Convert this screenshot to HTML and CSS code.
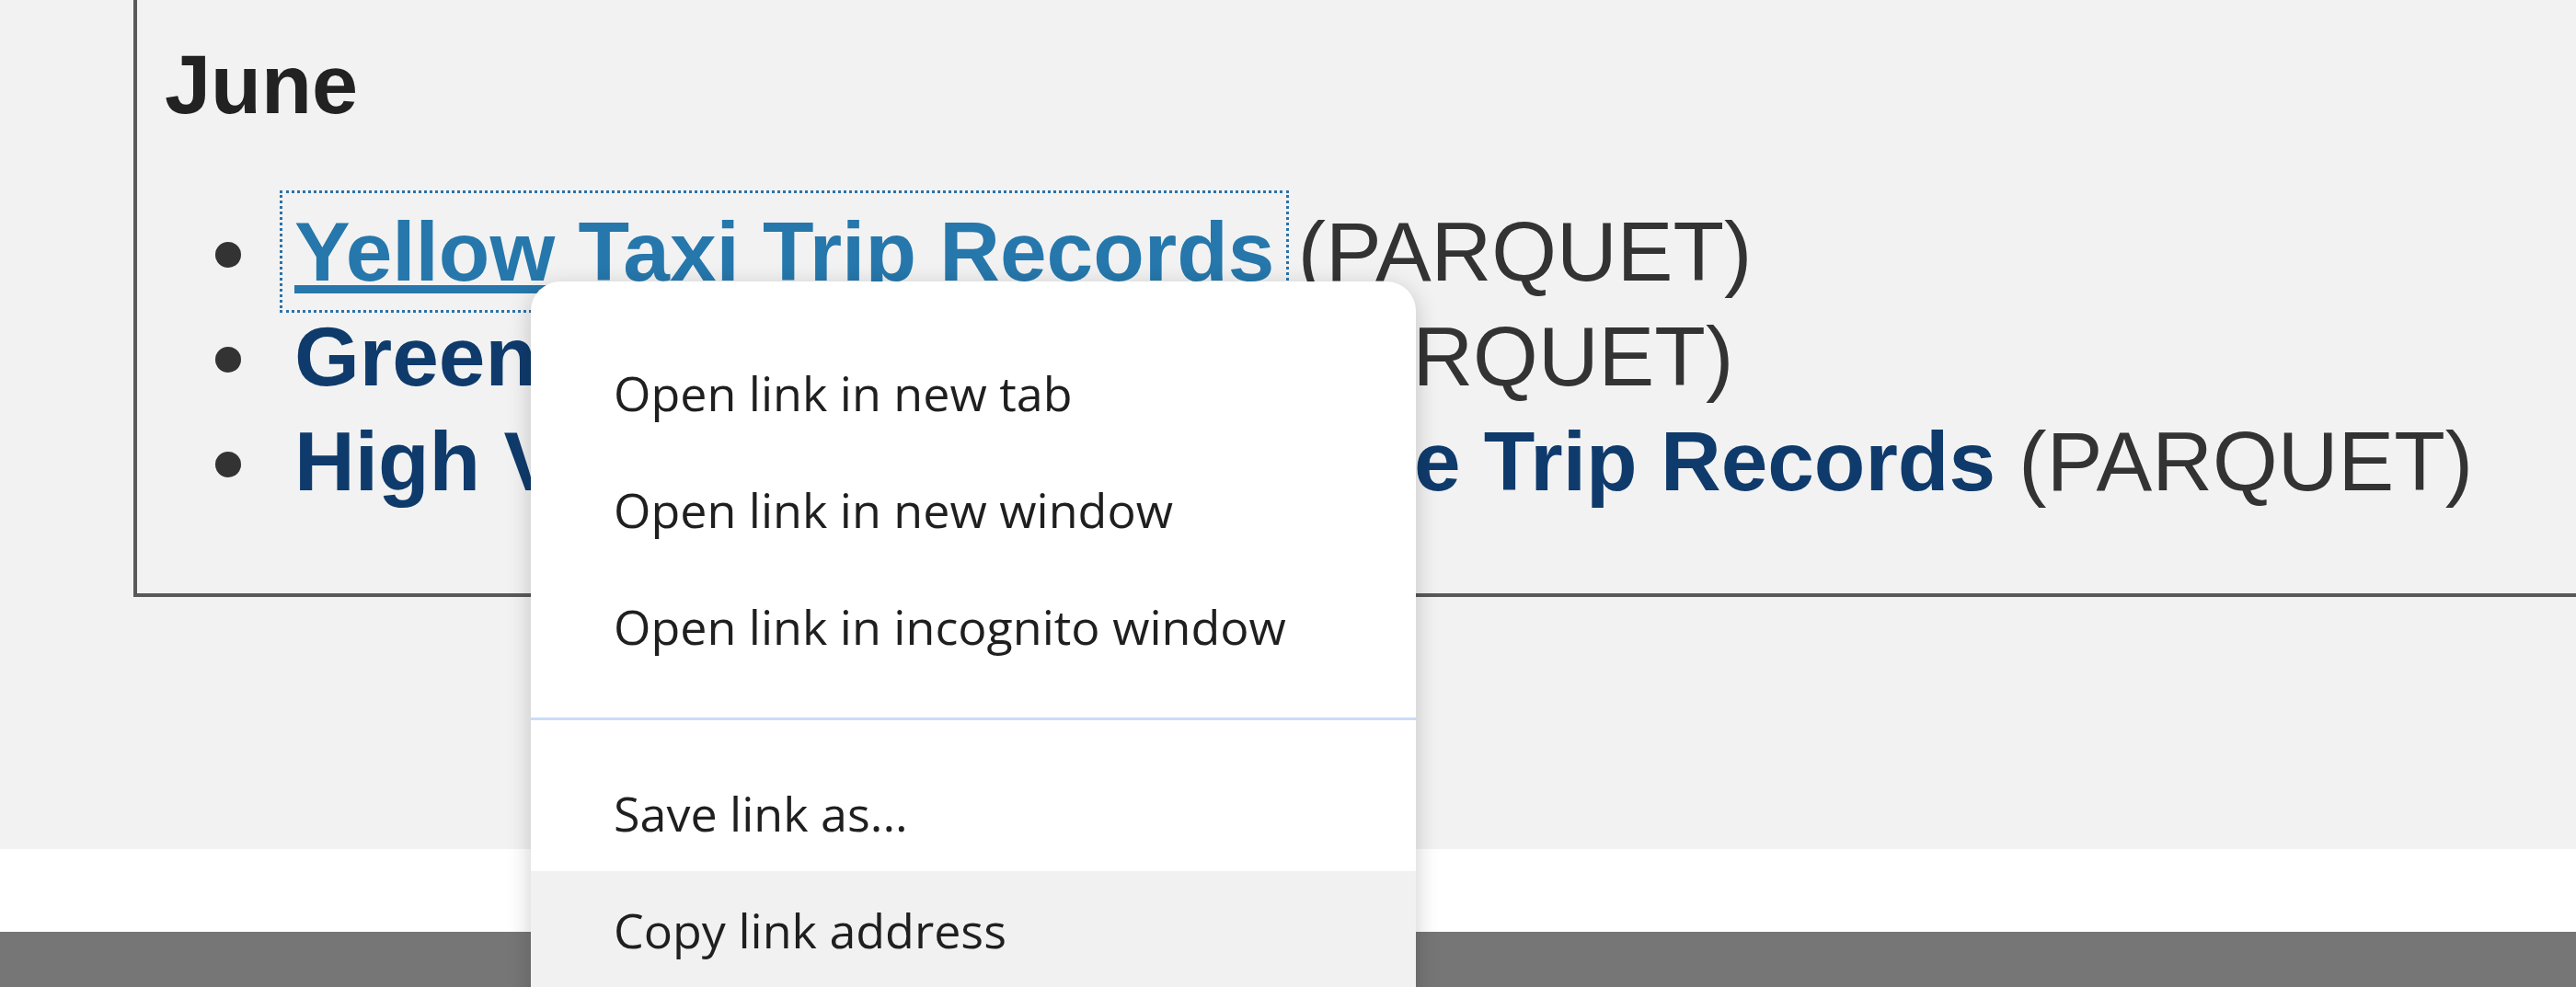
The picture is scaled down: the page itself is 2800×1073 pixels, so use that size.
FILE: index.html
```html
<!DOCTYPE html>
<html lang="en">
<head>
<meta charset="utf-8">
<title>June trip records</title>
<link rel="stylesheet" href="styles.css">
</head>
<body>
  <main class="page">
    <section class="box">
      <h3 class="month">June</h3>
      <ul class="files">
        <li class="file"><a class="link focused" href="#">Yellow Taxi Trip Records</a> (PARQUET)</li>
        <li class="file"><a class="link" href="#">Green Taxi Trip Records</a> (PARQUET)</li>
        <li class="file"><a class="link" href="#">High Volume For-Hire Vehicle Trip Records</a> (PARQUET)</li>
      </ul>
    </section>
  </main>
  <div class="band"></div>
  <footer class="footer"></footer>

  <div class="menu">
    <div class="item">Open link in new tab</div>
    <div class="item">Open link in new window</div>
    <div class="item">Open link in incognito window</div>
    <div class="sep"></div>
    <div class="item">Save link as...</div>
    <div class="item hover">Copy link address</div>
  </div>
</body>
</html>
```

FILE: styles.css
```css
html, body {
  margin: 0;
  height: 100%;
  overflow: hidden;
}

body {
  font-family: "Liberation Sans", Arial, sans-serif;
  background: #767676;
}

.page {
  background: #f2f2f2;
  height: 923px;
  padding-left: 145px;
  box-sizing: border-box;
  overflow: hidden;
}

.box {
  border-left: 4px solid #595959;
  border-bottom: 4px solid #595959;
  padding: 35px 0 86px 30px;
  font-size: 91px;
  line-height: 114px;
  color: #333333;
}

.month {
  margin: 0 0 68px;
  font-size: 90px;
  line-height: 114px;
  font-weight: bold;
  color: #222222;
}

.files {
  margin: 0;
  padding-left: 141px;
  list-style: none;
}

.file::before {
  content: "";
  display: inline-block;
  width: 28px;
  height: 28px;
  border-radius: 50%;
  background: #333333;
  margin-left: -86px;
  margin-right: 58px;
  vertical-align: 14px;
}

.link {
  font-weight: bold;
  color: #0f3b6c;
  text-decoration: none;
}

.link.focused {
  color: #2677ab;
  text-decoration: underline;
  outline: 3px dotted #2b72a8;
  outline-offset: 13px;
}

.band {
  background: #ffffff;
  height: 90px;
}

.footer {
  background: #767676;
  height: 60px;
}

.menu {
  position: absolute;
  left: 577px;
  top: 306px;
  width: 962px;
  background: #ffffff;
  border-radius: 32px;
  box-shadow: 0 6px 26px rgba(0, 0, 0, 0.2);
  padding: 57px 0 40px;
  font-family: "Open Sans", "Noto Sans", sans-serif;
  font-size: 52px;
  color: #1f1f1f;
}

.item {
  height: 127px;
  display: flex;
  align-items: center;
  padding-left: 90px;
}

.item.hover {
  background: #f1f1f1;
}

.sep {
  height: 3px;
  background: #cadcf7;
  margin: 36px 0 37px;
}
```
